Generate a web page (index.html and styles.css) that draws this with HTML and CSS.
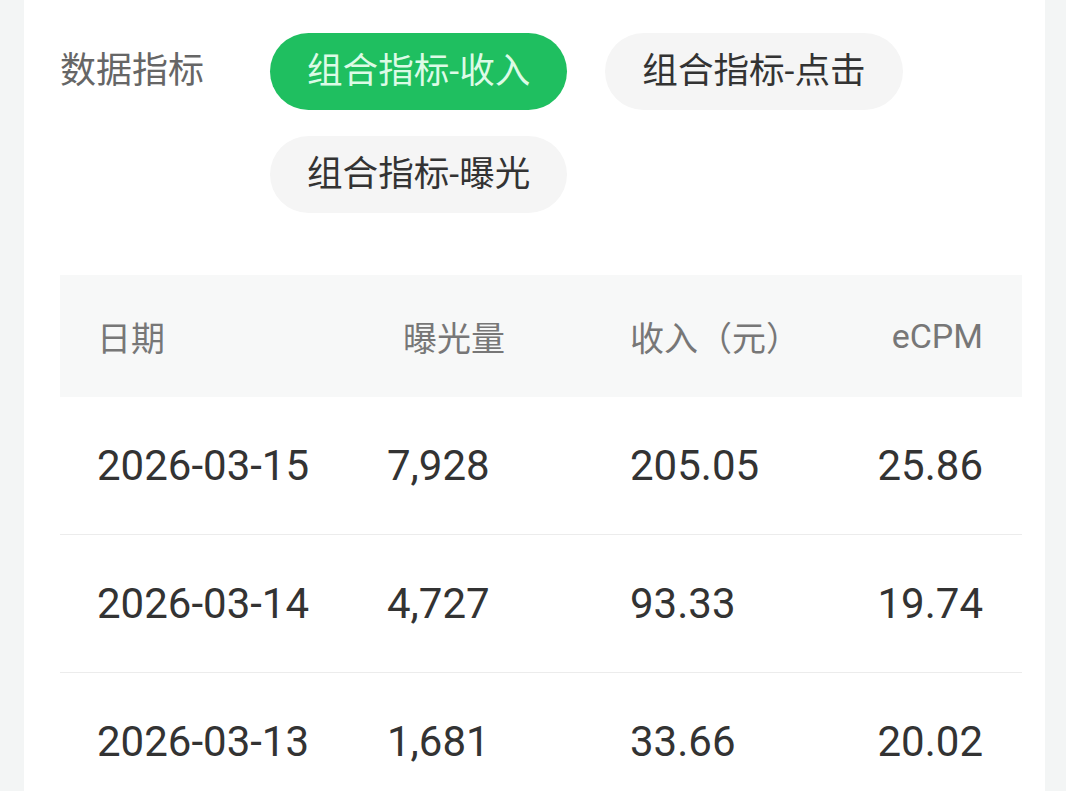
FILE: index.html
```html
<!DOCTYPE html>
<html lang="zh-CN">
<head>
<meta charset="utf-8">
<title>数据指标</title>
<link rel="stylesheet" href="styles.css">
</head>
<body>
<div class="card">
  <div class="metric-row">
    <div class="metric-label">数据指标</div>
    <div class="chips">
      <div class="chip chip-active">组合指标-收入</div>
      <div class="chip">组合指标-点击</div>
      <div class="chip">组合指标-曝光</div>
    </div>
  </div>
  <div class="table">
    <div class="thead">
      <div class="c c1">日期</div>
      <div class="c c2 h2">曝光量</div>
      <div class="c c3">收入（元）</div>
      <div class="c c4">eCPM</div>
    </div>
    <div class="trow">
      <div class="c c1">2026-03-15</div>
      <div class="c c2">7,928</div>
      <div class="c c3">205.05</div>
      <div class="c c4">25.86</div>
    </div>
    <div class="trow">
      <div class="c c1">2026-03-14</div>
      <div class="c c2">4,727</div>
      <div class="c c3">93.33</div>
      <div class="c c4">19.74</div>
    </div>
    <div class="trow">
      <div class="c c1">2026-03-13</div>
      <div class="c c2">1,681</div>
      <div class="c c3">33.66</div>
      <div class="c c4">20.02</div>
    </div>
  </div>
</div>
</body>
</html>
```

FILE: styles.css
```css
html, body {
  margin: 0;
  padding: 0;
}
body {
  background: #f3f5f5;
  font-family: Roboto, "Noto Sans CJK SC", sans-serif;
  height: 791px;
  overflow: hidden;
}
.card {
  background: #ffffff;
  margin: 0 21px 0 24px;
  padding: 33px 23px 0 36px;
  height: 900px;
  box-sizing: border-box;
}
.metric-row {
  display: flex;
  align-items: flex-start;
}
.metric-label {
  width: 210px;
  flex: none;
  height: 77px;
  line-height: 77px;
  font-size: 36px;
  color: #666666;
}
.chips {
  display: flex;
  flex-wrap: wrap;
  column-gap: 38px;
  row-gap: 26px;
  width: 660px;
}
.chip {
  height: 77px;
  line-height: 77px;
  padding: 0 37px;
  border-radius: 39px;
  background: #f5f5f5;
  color: #333333;
  font-size: 35.6px;
  white-space: nowrap;
}
.chip-active {
  background: #1fbf60;
  color: #dcfbe6;
}
.table {
  margin-top: 62px;
  width: 962px;
}
.thead, .trow {
  display: grid;
  grid-template-columns: 290px 243px 1fr 200px;
  align-items: center;
  padding: 0 39px 0 37px;
}
.thead {
  height: 122px;
  background: #f7f8f8;
  color: #777777;
  font-size: 34px;
}
.trow {
  height: 138px;
  border-bottom: 1px solid #ececec;
  box-sizing: border-box;
  color: #333333;
  font-size: 42px;
}
.c4 {
  text-align: right;
}
.h2 {
  padding-left: 16px;
}
```
